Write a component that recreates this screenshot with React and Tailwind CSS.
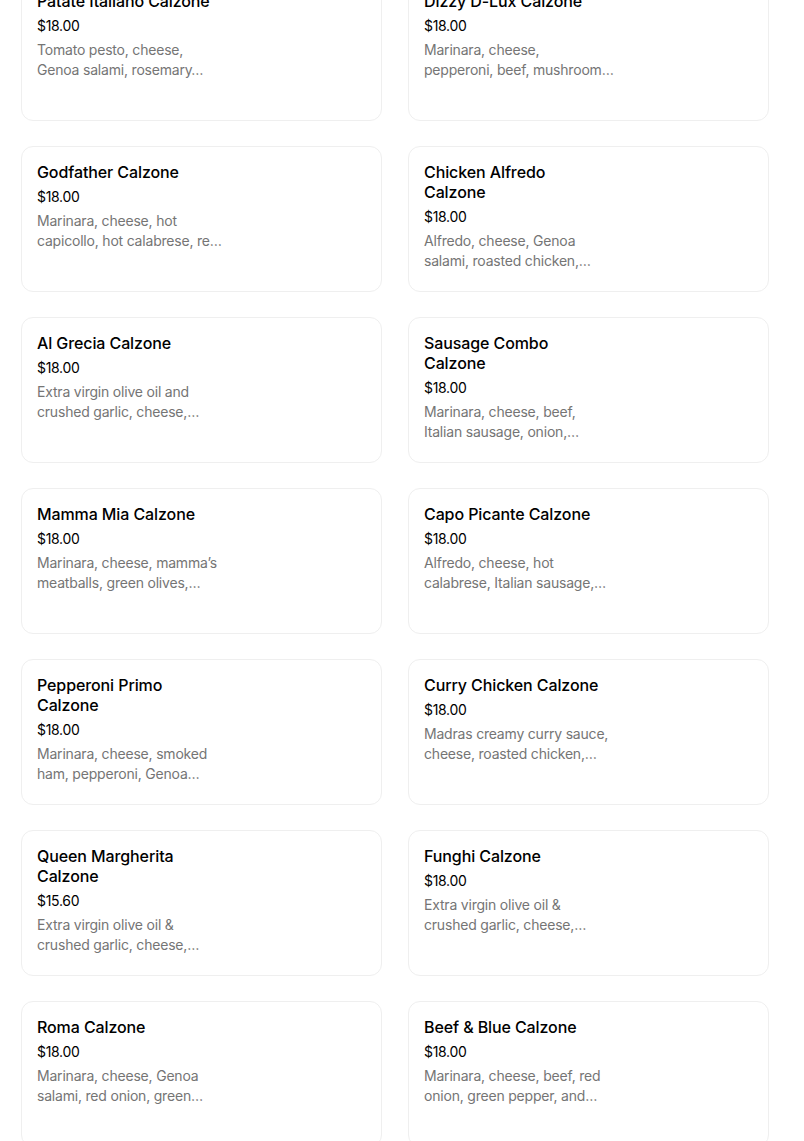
const items = [
  ["Patate Italiano Calzone", "$18.00", ["Tomato pesto, cheese,", "Genoa salami, rosemary…"]],
  ["Dizzy D-Lux Calzone", "$18.00", ["Marinara, cheese,", "pepperoni, beef, mushroom…"]],
  ["Godfather Calzone", "$18.00", ["Marinara, cheese, hot", "capicollo, hot calabrese, re…"]],
  ["Chicken Alfredo Calzone", "$18.00", ["Alfredo, cheese, Genoa", "salami, roasted chicken,…"]],
  ["Al Grecia Calzone", "$18.00", ["Extra virgin olive oil and", "crushed garlic, cheese,…"]],
  ["Sausage Combo Calzone", "$18.00", ["Marinara, cheese, beef,", "Italian sausage, onion,…"]],
  ["Mamma Mia Calzone", "$18.00", ["Marinara, cheese, mamma’s", "meatballs, green olives,…"]],
  ["Capo Picante Calzone", "$18.00", ["Alfredo, cheese, hot", "calabrese, Italian sausage,…"]],
  ["Pepperoni Primo Calzone", "$18.00", ["Marinara, cheese, smoked", "ham, pepperoni, Genoa…"]],
  ["Curry Chicken Calzone", "$18.00", ["Madras creamy curry sauce,", "cheese, roasted chicken,…"]],
  ["Queen Margherita Calzone", "$15.60", ["Extra virgin olive oil &", "crushed garlic, cheese,…"]],
  ["Funghi Calzone", "$18.00", ["Extra virgin olive oil &", "crushed garlic, cheese,…"]],
  ["Roma Calzone", "$18.00", ["Marinara, cheese, Genoa", "salami, red onion, green…"]],
  ["Beef & Blue Calzone", "$18.00", ["Marinara, cheese, beef, red", "onion, green pepper, and…"]],
]

const Card = ({ name, price, desc }) => (
  <div className="h-[146px] rounded-xl border border-[#efefef] bg-white pl-[15px] pr-4 pt-[15px]">
    <div className="w-[184px]">
      <h3 className="text-[16px] leading-5 font-medium tracking-[-0.1px] text-black">{name}</h3>
      <p className="mt-[5px] text-[14px] leading-5 tracking-[-0.3px] text-black">{price}</p>
      <p className="mt-[4px] text-[14px] leading-5 tracking-[-0.2px] text-[#757575] whitespace-nowrap">
        {desc.map(line => (
          <span key={line} className="block">{line}</span>
        ))}
      </p>
    </div>
  </div>
)

export default function App() {
  return (
    <div className="h-[1141px] overflow-hidden bg-white" style={{ fontFamily: "Inter, 'Liberation Sans', sans-serif" }}>
      <div className="ml-[21px] -mt-[25px] grid w-[748px] grid-cols-2 gap-x-[26px] gap-y-[25px]">
        {items.map(([name, price, desc]) => (
          <Card key={name} name={name} price={price} desc={desc} />
        ))}
      </div>
    </div>
  )
}
